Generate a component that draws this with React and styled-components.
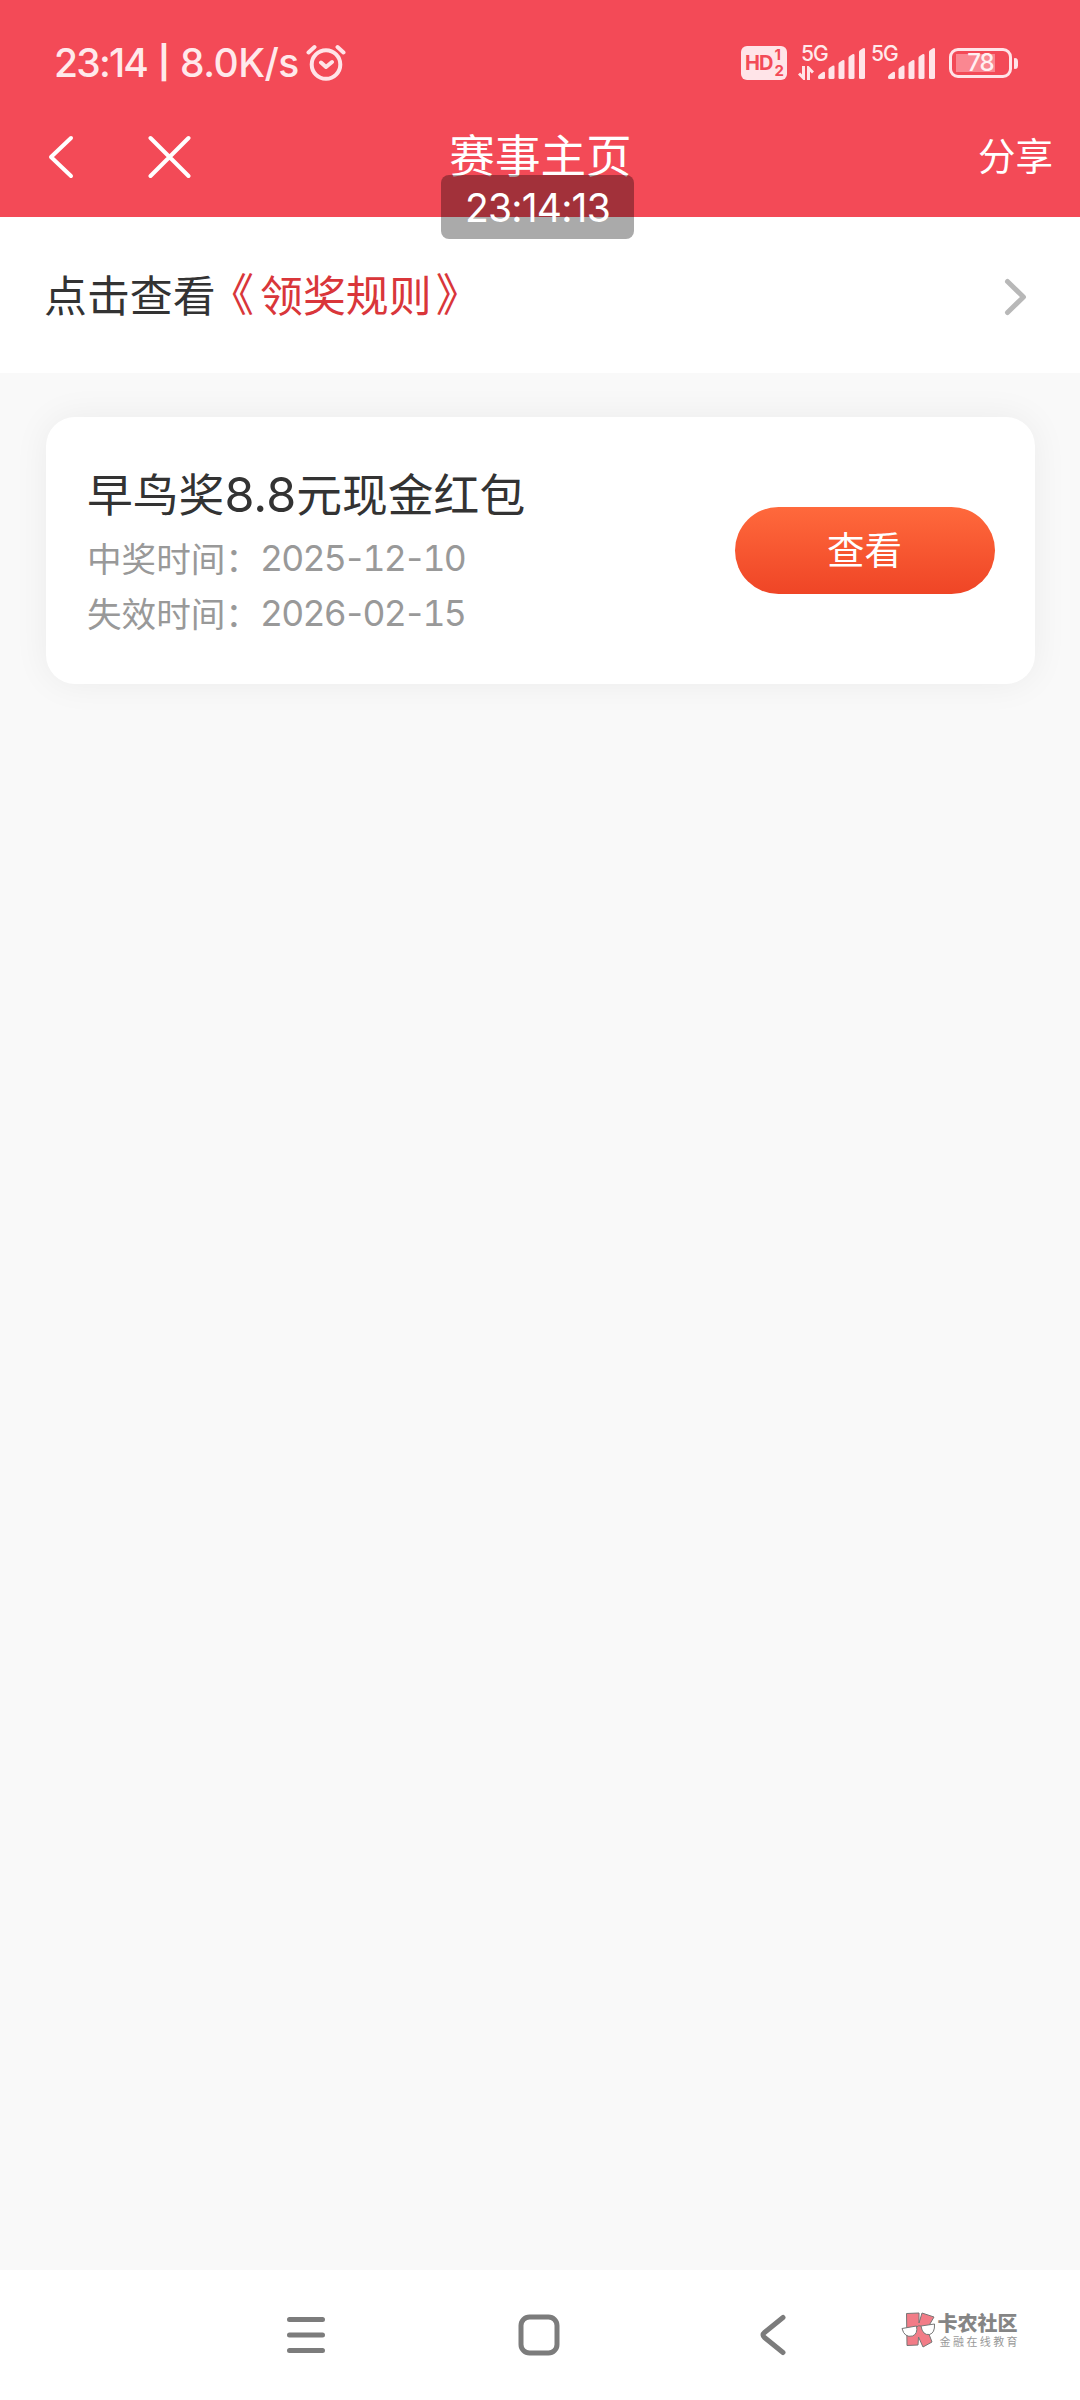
import React from 'react';
import styled, { createGlobalStyle } from 'styled-components';

const GlobalStyle = createGlobalStyle`
  * { box-sizing: border-box; }
  body {
    margin: 0;
    background: #f9f9f9;
    font-family: Inter, "Noto Sans CJK SC", sans-serif;
  }
  svg { display: block; flex: none; }
`;

const Screen = styled.div`
  position: relative;
  display: flex;
  flex-direction: column;
  width: 1080px;
  height: 2400px;
  background: #f9f9f9;
  overflow: hidden;
`;

const Header = styled.header`
  background: #f34a57;
  color: #fff;
  height: 217px;
`;

const StatusBar = styled.div`
  display: flex;
  align-items: center;
  justify-content: space-between;
  height: 126px;
  padding: 0 62px 0 54px;
  color: #ffe9eb;
`;

const StatusGroup = styled.div`
  display: flex;
  align-items: center;
`;

const StatusText = styled.div`
  display: flex;
  align-items: center;
  width: 252px;
  font-size: 39px;
  font-weight: 500;
  line-height: 50px;
  white-space: nowrap;
`;

const StatusTime = styled.span`
  width: 104px;
  letter-spacing: -1.8px;
`;

const StatusDivider = styled.span`
  width: 22px;
  font-size: 32px;
  font-weight: 700;
  line-height: 46px;
`;

const StatusSpeed = styled.span`
  letter-spacing: -0.5px;
`;

const HdBadge = styled.div`
  display: flex;
  align-items: center;
  justify-content: center;
  width: 46px;
  height: 34px;
  border-radius: 6px;
  background: #ffe4e8;
  color: #f34a57;
  font-size: 20px;
  font-weight: 700;
  letter-spacing: -1px;
`;

const HdDigits = styled.span`
  display: flex;
  flex-direction: column;
  margin-left: 2px;
  font-size: 15px;
  line-height: 16px;
`;

const Signal = styled.div`
  position: relative;
  width: ${(p) => p.$width}px;
  height: 34px;
  margin-left: ${(p) => p.$gap}px;
`;

const SignalLabel = styled.span`
  position: absolute;
  left: ${(p) => p.$left}px;
  top: -1px;
  font-size: 21px;
  font-weight: 500;
  line-height: 18px;
  letter-spacing: -1px;
`;

const SignalGraph = styled.div`
  padding-left: ${(p) => p.$left}px;
`;

const DataArrows = styled.svg`
  margin-top: -14px;
`;

const Battery = styled.div`
  display: flex;
  align-items: center;
  margin-left: 14px;
`;

const BatteryBody = styled.div`
  display: flex;
  align-items: center;
  justify-content: center;
  width: 63px;
  height: 30px;
  border: 3px solid #ffe4e8;
  border-radius: 9px;
  color: #fff0f1;
  font-size: 24px;
  font-weight: 500;
  letter-spacing: -1px;
  line-height: 24px;
  background: linear-gradient(#fa8791, #fa8791) 4px 3px / 39px 18px no-repeat;
`;

const BatteryTip = styled.div`
  width: 4px;
  height: 11px;
  margin-left: 2px;
  border-radius: 1px 4px 4px 1px;
  background: #ffe4e8;
`;

const NavBar = styled.nav`
  display: grid;
  grid-template-columns: 1fr auto 1fr;
  align-items: center;
  height: 60px;
  padding: 0 27px 0 47px;
`;

const NavIcons = styled.div`
  display: flex;
  gap: 72.5px;
`;

const NavTitle = styled.h1`
  margin: 0 0 0 -19px;
  padding-top: 1px;
  font-size: 45.6px;
  font-weight: 400;
  line-height: 60px;
`;

const Share = styled.span`
  justify-self: end;
  padding-top: 1px;
  font-size: 37.5px;
  line-height: 60px;
`;

const Clock = styled.div`
  position: absolute;
  left: 441px;
  top: 175px;
  width: 193px;
  height: 64px;
  border-radius: 8px;
  background: rgba(0, 0, 0, 0.335);
  color: #fff;
  font-size: 39px;
  letter-spacing: -0.8px;
  line-height: 66px;
  text-align: center;
`;

const RulesRow = styled.a`
  display: flex;
  align-items: center;
  justify-content: space-between;
  height: 156px;
  padding: 2px 52px 0 44px;
  background: #fff;
  color: #333;
  font-size: 42.9px;
`;

const RulesText = styled.span`
  line-height: 60px;
  margin-bottom: 4px;
`;

const RulesLink = styled.em`
  font-style: normal;
  color: #d9363a;
`;

const BookMark = styled.span`
  margin: 0 ${(p) => p.$after}px 0 ${(p) => p.$before}px;
  font-family: "Noto Sans CJK SC", sans-serif;
  font-size: 45px;
  line-height: 60px;
  font-feature-settings: "halt" 1;
`;

const Card = styled.section`
  display: flex;
  align-items: center;
  justify-content: space-between;
  height: 267px;
  margin: 44px 45px 0 46px;
  padding: 0 40px 0 41px;
  border-radius: 29px;
  background: #fff;
  box-shadow: 0 0 36px rgba(0, 0, 0, 0.06);
`;

const CardTitle = styled.h2`
  margin: 0 0 2px;
  padding-top: 2px;
  font-size: 45.8px;
  font-weight: 400;
  line-height: 66px;
  color: #333;
`;

const Amount = styled.span`
  font-size: 48.5px;
  line-height: 60px;
`;

const CardLine = styled.p`
  display: flex;
  margin: 0;
  padding-top: 1px;
  font-size: 34.6px;
  line-height: 54px;
  color: #999;
`;

const DateText = styled.span`
  font-size: 35.5px;
  font-variant-numeric: tabular-nums;
  letter-spacing: -1.7px;
`;

const Hyphen = styled.span`
  margin: 0 -2px;
`;

const ViewButton = styled.button`
  width: 260px;
  height: 87px;
  padding: 0 1px 5px 0;
  border: 0;
  border-radius: 44px;
  background: linear-gradient(#ff693c, #ef4526);
  color: #fff;
  font: 400 37.5px/60px "Noto Sans CJK SC", sans-serif;
`;

const SystemBar = styled.footer`
  display: flex;
  align-items: center;
  height: 130px;
  margin-top: auto;
  padding: 0 62px 0 286px;
  background: #fff;
`;

const SystemIcon = styled.div`
  width: ${(p) => p.$width}px;
`;

const Brand = styled.div`
  display: flex;
  align-items: center;
  gap: 2px;
  margin: -10px 0 0 auto;
`;

const BrandName = styled.div`
  font: 900 20px/20px "Noto Sans CJK SC", sans-serif;
  color: #858585;
`;

const BrandSlogan = styled.div`
  padding: 2px 0 0 2px;
  font: 400 11px/12px "Noto Sans CJK SC", sans-serif;
  letter-spacing: 2.4px;
  margin-right: -2px;
  color: #999;
`;

function SignalBars() {
  return (
    <svg width="48" height="34" viewBox="0 0 48 34" fill="#ffe4e8">
      <path d="M0 31q0-1.500 1.500-2.500L5 26q2-.8 2 1v4.500q0 1.500-1.500 1.500h-4Q0 33 0 31.500z" />
      <path d="M10.500 23.500q0-1 1-1.800l3-2q2-.8 2 1v10.800q0 1.500-1.500 1.500h-3q-1.500 0-1.500-1.500z" />
      <path d="M20.500 18q0-1 1-1.800l3-2q2-.8 2 1v16.300q0 1.500-1.500 1.500h-3q-1.500 0-1.500-1.500z" />
      <path d="M30.500 12q0-1 1-1.800l3-2q2-.8 2 1v22.300q0 1.500-1.500 1.500h-3q-1.500 0-1.500-1.500z" />
      <path d="M41 6q0-1 1-1.800l3-2q2-.8 2 1v28.300q0 1.500-1.500 1.500h-3q-1.500 0-1.500-1.500z" />
    </svg>
  );
}

function AlarmIcon() {
  return (
    <svg width="40" height="38" viewBox="0 0 40 38" fill="none" stroke="#ffe4e8" strokeWidth="4" strokeLinecap="round" strokeLinejoin="round">
      <circle cx="20" cy="20.500" r="14.300" />
      <path d="M2.500 8.500 8.500 3M31.500 3l6 5.500M15 18.500l5 4.500 6-5" />
    </svg>
  );
}

function BrandMark() {
  return (
    <svg width="35" height="36" viewBox="0 0 35 36" stroke="#777" strokeWidth="1" strokeLinejoin="round">
      <path d="M5.500 1.500 18 1v10L21 1l12 4-7 12 5 13-9 5-4.500-10-.5 8L6 33.500z" fill="#f27c87" />
      <path d="M1 16.500 15.500 14q1.500 8-4 10-8 2-10.500-7.500zM20 14l13.500-2q.5 9-5 10.500Q21.500 23.500 20 14z" fill="#fff" />
      <path d="M15.500 15q2-2 4.500-1" fill="none" />
    </svg>
  );
}

function DateRow({ label, parts }) {
  return (
    <CardLine>
      {label}：
      <DateText>
        {parts[0]}<Hyphen>-</Hyphen>{parts[1]}<Hyphen>-</Hyphen>{parts[2]}
      </DateText>
    </CardLine>
  );
}

export default function App() {
  return (
    <Screen>
      <GlobalStyle />
      <Header>
        <StatusBar>
          <StatusGroup>
            <StatusText>
              <StatusTime>23:14</StatusTime>
              <StatusDivider>|</StatusDivider>
              <StatusSpeed>8.0K/s</StatusSpeed>
            </StatusText>
            <AlarmIcon />
          </StatusGroup>
          <StatusGroup>
            <HdBadge>
              HD
              <HdDigits>
                <span>1</span>
                <span>2</span>
              </HdDigits>
            </HdBadge>
            <Signal $width={68} $gap={11}>
              <SignalLabel $left={3}>5G</SignalLabel>
              <SignalGraph $left={20}>
                <SignalBars />
              </SignalGraph>
              <DataArrows width="16" height="14" viewBox="0 0 16 14" fill="none" stroke="#ffe4e8" strokeWidth="3">
                <path d="M5.500 0v12L1 7.500M10.500 14V2L15 6.500" />
              </DataArrows>
            </Signal>
            <Signal $width={64} $gap={5}>
              <SignalLabel $left={0}>5G</SignalLabel>
              <SignalGraph $left={17}>
                <SignalBars />
              </SignalGraph>
            </Signal>
            <Battery>
              <BatteryBody>78</BatteryBody>
              <BatteryTip />
            </Battery>
          </StatusGroup>
        </StatusBar>
        <NavBar>
          <NavIcons>
            <svg width="28" height="44" viewBox="0 0 28 44" fill="none" stroke="#fff" strokeWidth="4" strokeLinecap="round" strokeLinejoin="round">
              <path d="M24 3 4 22l20 19" />
            </svg>
            <svg width="44" height="44" viewBox="0 0 44 44" fill="none" stroke="#fff" strokeWidth="4" strokeLinecap="round">
              <path d="m2.500 3 38 38M40.500 3l-38 38" />
            </svg>
          </NavIcons>
          <NavTitle>赛事主页</NavTitle>
          <Share>分享</Share>
        </NavBar>
      </Header>
      <Clock>23:14:13</Clock>

      <RulesRow>
        <RulesText>
          点击查看
          <RulesLink>
            <BookMark $before={16} $after={6}>《</BookMark>领奖规则<BookMark $before={4} $after={0}>》</BookMark>
          </RulesLink>
        </RulesText>
        <svg width="25" height="40" viewBox="0 0 25 40" fill="none" stroke="#b8b8b8" strokeWidth="5" strokeLinecap="round" strokeLinejoin="round">
          <path d="M4.500 5.500 20.500 21 4.500 36.500" />
        </svg>
      </RulesRow>

      <Card>
        <div>
          <CardTitle>早鸟奖<Amount>8.8</Amount>元现金红包</CardTitle>
          <DateRow label="中奖时间" parts={['2025', '12', '10']} />
          <DateRow label="失效时间" parts={['2026', '02', '15']} />
        </div>
        <ViewButton>查看</ViewButton>
      </Card>

      <SystemBar>
        <SystemIcon $width={232}>
          <svg width="40" height="42" viewBox="0 0 40 42" stroke="#7c7c7c" strokeWidth="5" strokeLinecap="round">
            <path d="M3.500 5.500h33M3.500 21h33M3.500 36.500h33" />
          </svg>
        </SystemIcon>
        <SystemIcon $width={241}>
          <svg width="42" height="42" viewBox="0 0 42 42" fill="none" stroke="#7c7c7c" strokeWidth="5">
            <rect x="3" y="3" width="36" height="36" rx="8.500" />
          </svg>
        </SystemIcon>
        <svg width="28" height="42" viewBox="0 0 28 42" fill="none" stroke="#7c7c7c" strokeWidth="5" strokeLinecap="round">
          <path d="M24 3.500 5.500 18.500q-3 2.500 0 5L24 38.500" />
        </svg>
        <Brand>
          <BrandMark />
          <div>
            <BrandName>卡农社区</BrandName>
            <BrandSlogan>金融在线教育</BrandSlogan>
          </div>
        </Brand>
      </SystemBar>
    </Screen>
  );
}
